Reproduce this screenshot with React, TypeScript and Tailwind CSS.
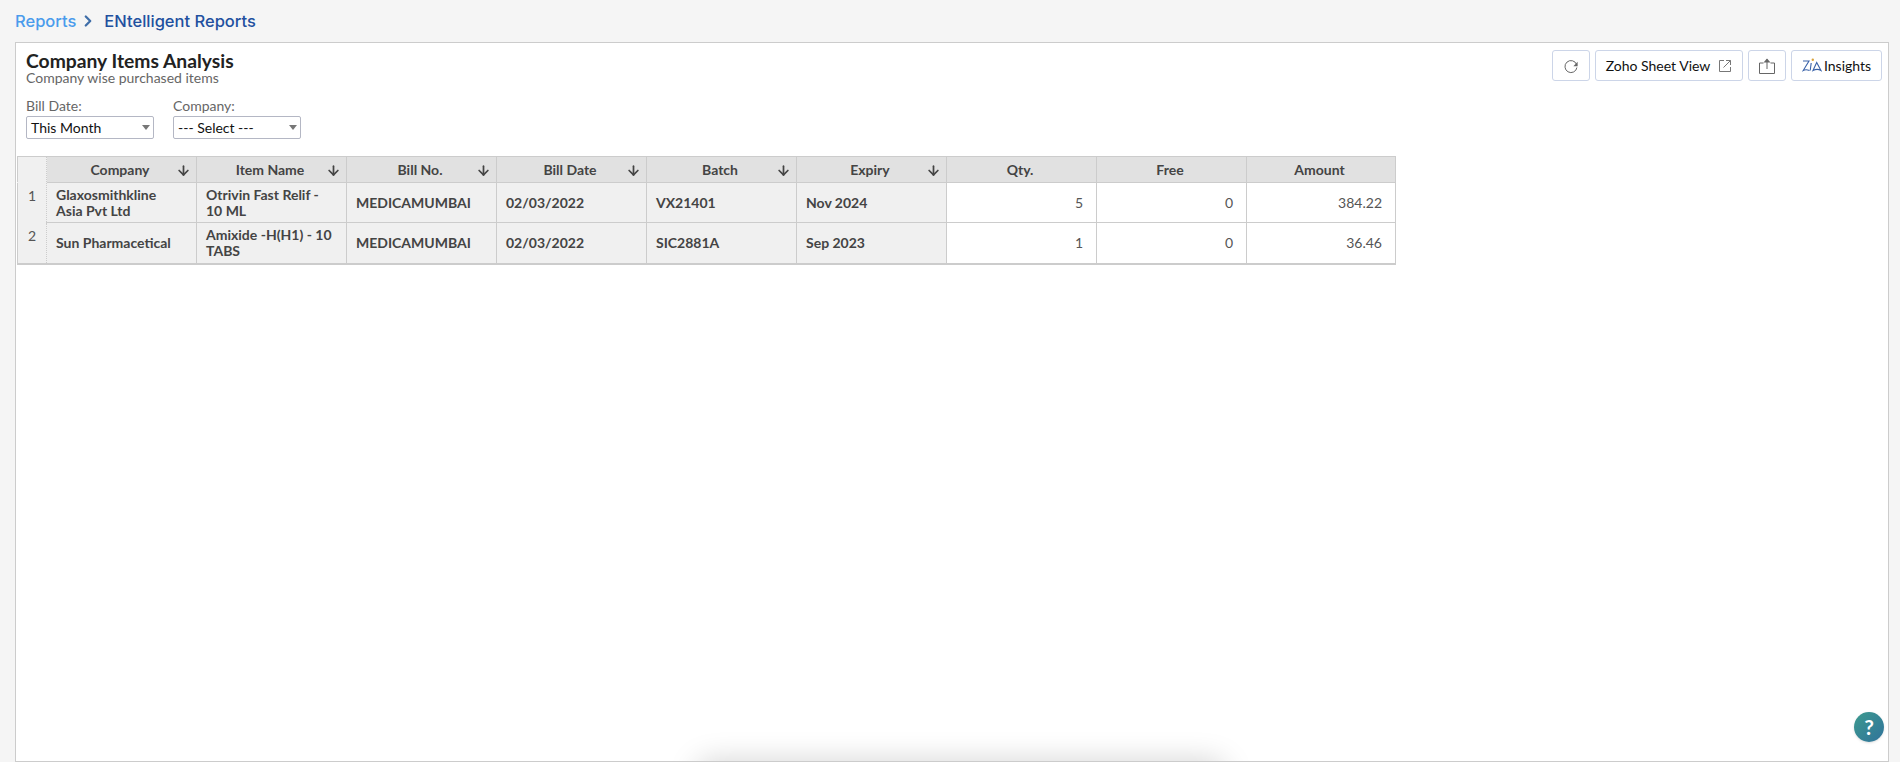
import React from 'react';
import { ArrowDown, ChevronRight } from 'lucide-react';

const COLUMNS = ['Company', 'Item Name', 'Bill No.', 'Bill Date', 'Batch', 'Expiry', 'Qty.', 'Free', 'Amount'];

const ROWS = [
  ['Glaxosmithkline Asia Pvt Ltd', 'Otrivin Fast Relif - 10 ML', 'MEDICAMUMBAI', '02/03/2022', 'VX21401', 'Nov 2024', '5', '0', '384.22'],
  ['Sun Pharmacetical', 'Amixide -H(H1) - 10 TABS', 'MEDICAMUMBAI', '02/03/2022', 'SIC2881A', 'Sep 2023', '1', '0', '36.46'],
];

const FilterSelect: React.FC<{ label: string; value: string }> = ({ label, value }) => (
  <div className="w-[128px]">
    <div className="text-[14px] leading-[18px] text-[#666]">{label}</div>
    <div className="mt-[1px] flex h-[23px] items-center justify-between rounded-[2px] border border-[#b4b7c4] bg-white pl-[4px] pr-[3px] text-[14px] text-[#111]">
      <span>{value}</span>
      <span className="h-0 w-0 border-x-[4px] border-t-[5px] border-x-transparent border-t-[#777]" />
    </div>
  </div>
);

const ToolButton: React.FC<{ className?: string; children: React.ReactNode }> = ({ className, children }) => (
  <button className={`flex h-[31px] items-center justify-center rounded-[3px] border border-[#ccd5e8] bg-white text-[14px] text-[#111] ${className}`}>
    {children}
  </button>
);

export default function App() {
  return (
    <div className="flex h-[762px] flex-col overflow-hidden bg-[#f5f5f5] font-['Lato',sans-serif]">
      {/* breadcrumb */}
      <div className="flex h-[42px] shrink-0 items-center pl-[15px] font-['Inter',sans-serif] text-[16.5px] font-medium">
        <span className="text-[#4a9bec]">Reports</span>
        <ChevronRight size={18} strokeWidth={3} className="ml-[3px] text-[#3f6ea8]" />
        <span className="ml-[7px] text-[#22509f]">ENtelligent Reports</span>
      </div>

      <div className="relative ml-[15px] mr-[11px] flex-1 overflow-hidden border border-[#cccccc] bg-white">
        <div className="flex justify-between pl-[10px] pr-[6px]">
          <div className="pt-[8px]">
            <div className="text-[19.3px] font-bold leading-[20px] text-[#222]">Company Items Analysis</div>
            <div className="text-[14px] leading-[14px] text-[#666]">Company wise purchased items</div>
          </div>
          <div className="flex gap-[5px] pt-[7px]">
            <ToolButton className="w-[38px]">
              <svg width="18" height="18" viewBox="0 0 18 18" fill="none" stroke="#666" strokeWidth="1">
                <path d="M14.6 7.5A6 6 0 1 0 14.9 10.5" />
                <path d="M15.6 4.8v4.4h-4.2z" fill="#666" stroke="none" />
              </svg>
            </ToolButton>
            <ToolButton className="w-[148px] gap-[8px]">
              <span>Zoho Sheet View</span>
              <svg width="14" height="14" viewBox="0 0 14 14" fill="none" stroke="#777" strokeWidth="1">
                <path d="M6 1.5H1.5v11h11V8" />
                <path d="M5.5 8.5 12.5 1.5M8 1.5h4.5V6" />
              </svg>
            </ToolButton>
            <ToolButton className="w-[38px]">
              <svg width="18" height="18" viewBox="0 0 18 18" fill="none" stroke="#666" strokeWidth="1">
                <path d="M5.5 6H1.5v10.5h15V6h-4" />
                <path d="M9 12V2" />
                <path d="M5.5 5.5 9 1.5l3.5 4z" fill="#666" stroke="none" />
              </svg>
            </ToolButton>
            <ToolButton className="w-[91px] gap-[2px]">
              <svg width="20" height="15" viewBox="0 0 20 15" fill="none" stroke="#3a62a8" strokeWidth="1.1">
                <path d="M1 3h6L1.2 12.5C3 11.5 5 11.5 7.5 12.5" />
                <path d="M9.2 5 8.2 12.5" />
                <circle cx="10.8" cy="1.8" r="1.2" fill="#d9a23a" stroke="none" />
                <path d="M11 12.5 14.7 4.5 19 12.5C16.5 11 14 11 11 12.5Z" />
              </svg>
              <span>Insights</span>
            </ToolButton>
          </div>
        </div>

        <div className="mt-[12px] flex gap-[19px] pl-[10px]">
          <FilterSelect label="Bill Date:" value="This Month" />
          <FilterSelect label="Company:" value="--- Select ---" />
        </div>

        <table className="ml-[1px] mt-[17px] w-[1378px] table-fixed border-collapse border-b-2 border-[#cccccc] text-[14px]">
          <colgroup>
            <col className="w-[29px]" />
            {COLUMNS.map((c, i) => (
              <col key={c} className={i === 8 ? 'w-[149px]' : 'w-[150px]'} />
            ))}
          </colgroup>
          <thead>
            <tr className="h-[26px]">
              <th className="border-y border-l border-r border-[#cccccc] border-b-[#f0f0f0] bg-[#f0f0f0] [border-right-style:dotted]" />
              {COLUMNS.map((c, i) => (
                <th key={c} className={`relative border border-[#cccccc] bg-[#e1e1e1] pr-[3px] font-bold text-[#444] ${i === 0 ? 'border-l-0' : ''}`}>
                  {c}
                  {i < 6 && (
                    <ArrowDown size={15} strokeWidth={2.75} className="absolute right-[5px] top-[6px] text-[#444]" />
                  )}
                </th>
              ))}
            </tr>
          </thead>
          <tbody>
            {ROWS.map((row, r) => (
              <tr key={r} className={r === 0 ? 'h-[40px]' : 'h-[41px]'}>
                <td className="border-y-0 border-l border-r border-[#cccccc] bg-[#f0f0f0] pb-[14px] text-center text-[#555] [border-right-style:dotted]">{r + 1}</td>
                {row.map((cell, i) =>
                  i < 6 ? (
                    <td key={i} className={`border border-[#cccccc] bg-[#f0f0f0] pl-[9px] pr-[13px] font-bold leading-[16px] text-[#444] ${i === 0 ? 'border-l-0' : ''}`}>
                      {cell}
                    </td>
                  ) : (
                    <td key={i} className="border border-[#cccccc] bg-white px-[13px] text-right text-[#555]">
                      {cell}
                    </td>
                  ),
                )}
              </tr>
            ))}
          </tbody>
        </table>

        {/* help bubble */}
        <div className="absolute bottom-[19px] right-[4px] flex h-[30px] w-[30px] items-center justify-center rounded-full bg-gradient-to-br from-[#3d9a8e] to-[#31729a] text-[21px] font-bold text-white shadow-sm">
          ?
        </div>
        {/* shadow of a bar just under the fold */}
        <div className="absolute bottom-[-30px] left-[680px] h-[30px] w-[530px] rounded-full shadow-[0_0_30px_rgba(0,0,0,0.18)]" />
      </div>
    </div>
  );
}
